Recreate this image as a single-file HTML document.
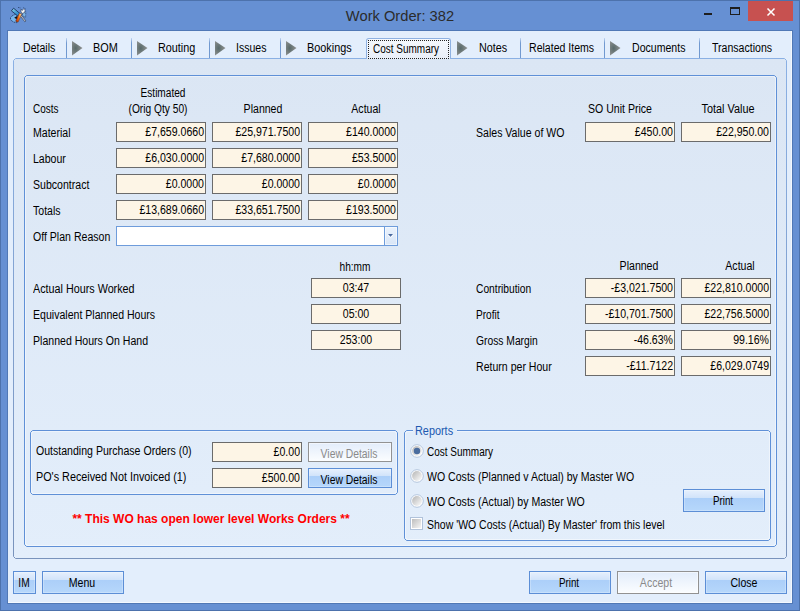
<!DOCTYPE html><html><head><meta charset="utf-8"><style>
html,body{margin:0;padding:0;width:800px;height:611px;overflow:hidden;background:#6690D3;}
body{position:relative;font-family:"Liberation Sans",sans-serif;}
.t{position:absolute;white-space:pre;font-family:"Liberation Sans",sans-serif;}
</style></head><body>
<div style="position:absolute;left:0px;top:0px;width:800px;height:611px;box-sizing:border-box;border:1px solid #4D72AC;background:#6690D3;"></div>
<div style="position:absolute;left:7px;top:30px;width:786px;height:574px;box-sizing:border-box;border:1px solid #5078B6;background:#E3EEFC;box-shadow:inset -1px -1px 0 #F3F8FF;"></div>
<div class="t" style="left:200.0px;top:6.5px;width:400px;text-align:center;line-height:17px;font-size:15.5px;color:#2B2B2B;font-weight:normal;transform:scaleX(0.947);transform-origin:center;">Work Order: 382</div>
<svg style="position:absolute;left:8px;top:4px" width="22" height="22" viewBox="0 0 22 22">
<defs><linearGradient id="ob" x1="0" y1="0.6" x2="1" y2="0.4"><stop offset="0" stop-color="#B02805"/><stop offset="0.45" stop-color="#F06A10"/><stop offset="1" stop-color="#FFE0A0"/></linearGradient>
<linearGradient id="bl" x1="0" y1="0" x2="1" y2="1"><stop offset="0" stop-color="#8FD0E0"/><stop offset="0.6" stop-color="#3A9AD6"/><stop offset="1" stop-color="#1E78C8"/></linearGradient></defs>
<path d="M2.5 13.5 Q4.5 11 7.5 10.5 L10 12.5 L9 18.6 Q5 18.6 2.6 15.6 Z" fill="#74B4EC" stroke="#1F3560" stroke-width="0.9" stroke-dasharray="1.2 0.7"/>
<path d="M6.2 13.8 L9.4 11.8 L8.8 15.2 Z" fill="#111"/>
<path d="M3.4 6.8 L5.6 4.2 L12 9.6 L9.8 12 Z" fill="url(#bl)" stroke="#1F3560" stroke-width="0.9"/>
<path d="M14 9 L17.8 7.8 L17.6 13.5 L15 12 Z" fill="#7DB6E6" stroke="#1F3560" stroke-width="0.7" stroke-dasharray="1 0.7"/>
<path d="M13.6 11.4 L18 17 L16.8 17.8 L12.6 12.4 Z" fill="#C4C4C4" stroke="#2A3A5A" stroke-width="0.6"/>
<path d="M10 3.4 L12.5 4 M15.5 3.6 L17.6 5" stroke="#1F3560" stroke-width="0.8" stroke-dasharray="0.9 0.7"/>
<path d="M13 5.2 L14.4 6.4 L15.8 4.6 L17.2 6 L16.6 8.6 L14.2 9.4 L13 8 Z" fill="#F4F4F4" stroke="#2A3A5A" stroke-width="0.6"/>
<path d="M7.6 17.2 L11.4 9 L13.8 10 L10 18.2 Z" fill="url(#ob)" stroke="#4A1A08" stroke-width="0.4"/>
</svg>
<div style="position:absolute;left:748px;top:1px;width:45px;height:20px;box-sizing:border-box;background:#C75150;"></div>
<svg style="position:absolute;left:748px;top:1px" width="45" height="20"><path d="M19.5 7.5 L26.5 14.5 M26.5 7.5 L19.5 14.5" stroke="#fff" stroke-width="1.5" fill="none"/></svg>
<div style="position:absolute;left:730px;top:7px;width:10px;height:8px;box-sizing:border-box;border:1px solid #1E1E1E;border-top-width:2px;"></div>
<div style="position:absolute;left:704px;top:13px;width:8px;height:2px;box-sizing:border-box;background:#1E1E1E;"></div>
<div style="position:absolute;left:14px;top:59px;width:772px;height:499px;box-sizing:border-box;background:linear-gradient(#DBE6F4 0%,#E3EEFB 100%);"></div>
<svg style="position:absolute;left:13px;top:58px" width="774" height="501"><defs><linearGradient id="pb" x1="0" y1="0" x2="0" y2="1"><stop offset="0" stop-color="#8AB0E4"/><stop offset="1" stop-color="#7993BC"/></linearGradient></defs><path d="M2.5 0.5 L771.5 0.5 L773.5 2.5 L773.5 498.5 L771.5 500.5 L2.5 500.5 L0.5 498.5 L0.5 2.5 Z" fill="none" stroke="url(#pb)" stroke-width="1"/></svg>
<div style="position:absolute;left:367px;top:58px;width:83px;height:1px;box-sizing:border-box;background:#EEF2FA;"></div>
<div style="position:absolute;left:366px;top:38px;width:85px;height:21px;box-sizing:border-box;border:1px solid #8EB1E2;border-bottom:none;border-radius:3px 3px 0 0;background:linear-gradient(#F5F8FD,#E9EEF8);"></div>
<div style="position:absolute;left:368px;top:40px;width:81px;height:19px;box-sizing:border-box;border:1px dotted #222;"></div>
<div style="position:absolute;left:66px;top:38px;width:1px;height:20px;box-sizing:border-box;background:linear-gradient(#C2D6F2,#7199D0 25%,#7199D0);"></div>
<div style="position:absolute;left:131px;top:38px;width:1px;height:20px;box-sizing:border-box;background:linear-gradient(#C2D6F2,#7199D0 25%,#7199D0);"></div>
<div style="position:absolute;left:209px;top:38px;width:1px;height:20px;box-sizing:border-box;background:linear-gradient(#C2D6F2,#7199D0 25%,#7199D0);"></div>
<div style="position:absolute;left:280px;top:38px;width:1px;height:20px;box-sizing:border-box;background:linear-gradient(#C2D6F2,#7199D0 25%,#7199D0);"></div>
<div style="position:absolute;left:520px;top:38px;width:1px;height:20px;box-sizing:border-box;background:linear-gradient(#C2D6F2,#7199D0 25%,#7199D0);"></div>
<div style="position:absolute;left:604px;top:38px;width:1px;height:20px;box-sizing:border-box;background:linear-gradient(#C2D6F2,#7199D0 25%,#7199D0);"></div>
<div style="position:absolute;left:699px;top:38px;width:1px;height:20px;box-sizing:border-box;background:linear-gradient(#C2D6F2,#7199D0 25%,#7199D0);"></div>
<svg style="position:absolute;left:72px;top:41px" width="11" height="15"><defs><radialGradient id="g72" cx="0.35" cy="0.5" r="0.7"><stop offset="0" stop-color="#586A6A"/><stop offset="1" stop-color="#979797"/></radialGradient></defs><path d="M0 0 L10.5 7 L0 14.5 Z" fill="url(#g72)"/></svg>
<svg style="position:absolute;left:137px;top:41px" width="11" height="15"><defs><radialGradient id="g137" cx="0.35" cy="0.5" r="0.7"><stop offset="0" stop-color="#586A6A"/><stop offset="1" stop-color="#979797"/></radialGradient></defs><path d="M0 0 L10.5 7 L0 14.5 Z" fill="url(#g137)"/></svg>
<svg style="position:absolute;left:215px;top:41px" width="11" height="15"><defs><radialGradient id="g215" cx="0.35" cy="0.5" r="0.7"><stop offset="0" stop-color="#586A6A"/><stop offset="1" stop-color="#979797"/></radialGradient></defs><path d="M0 0 L10.5 7 L0 14.5 Z" fill="url(#g215)"/></svg>
<svg style="position:absolute;left:286px;top:41px" width="11" height="15"><defs><radialGradient id="g286" cx="0.35" cy="0.5" r="0.7"><stop offset="0" stop-color="#586A6A"/><stop offset="1" stop-color="#979797"/></radialGradient></defs><path d="M0 0 L10.5 7 L0 14.5 Z" fill="url(#g286)"/></svg>
<svg style="position:absolute;left:457px;top:41px" width="11" height="15"><defs><radialGradient id="g457" cx="0.35" cy="0.5" r="0.7"><stop offset="0" stop-color="#586A6A"/><stop offset="1" stop-color="#979797"/></radialGradient></defs><path d="M0 0 L10.5 7 L0 14.5 Z" fill="url(#g457)"/></svg>
<svg style="position:absolute;left:610px;top:41px" width="11" height="15"><defs><radialGradient id="g610" cx="0.35" cy="0.5" r="0.7"><stop offset="0" stop-color="#586A6A"/><stop offset="1" stop-color="#979797"/></radialGradient></defs><path d="M0 0 L10.5 7 L0 14.5 Z" fill="url(#g610)"/></svg>
<div class="t" style="left:22.5px;top:41px;width:400px;text-align:left;line-height:14px;font-size:12px;color:#000;font-weight:normal;transform:scaleX(0.88);transform-origin:left;">Details</div>
<div class="t" style="left:92.5px;top:41px;width:400px;text-align:left;line-height:14px;font-size:12px;color:#000;font-weight:normal;transform:scaleX(0.9064);transform-origin:left;">BOM</div>
<div class="t" style="left:157.5px;top:41px;width:400px;text-align:left;line-height:14px;font-size:12px;color:#000;font-weight:normal;transform:scaleX(0.9019999999999999);transform-origin:left;">Routing</div>
<div class="t" style="left:235.5px;top:41px;width:400px;text-align:left;line-height:14px;font-size:12px;color:#000;font-weight:normal;transform:scaleX(0.88);transform-origin:left;">Issues</div>
<div class="t" style="left:306.5px;top:41px;width:400px;text-align:left;line-height:14px;font-size:12px;color:#000;font-weight:normal;transform:scaleX(0.9064);transform-origin:left;">Bookings</div>
<div class="t" style="left:372.5px;top:42px;width:400px;text-align:left;line-height:14px;font-size:12px;color:#000;font-weight:normal;transform:scaleX(0.83248);transform-origin:left;">Cost Summary</div>
<div class="t" style="left:478.5px;top:41px;width:400px;text-align:left;line-height:14px;font-size:12px;color:#000;font-weight:normal;transform:scaleX(0.8976000000000001);transform-origin:left;">Notes</div>
<div class="t" style="left:528.5px;top:41px;width:400px;text-align:left;line-height:14px;font-size:12px;color:#000;font-weight:normal;transform:scaleX(0.88);transform-origin:left;">Related Items</div>
<div class="t" style="left:631.5px;top:41px;width:400px;text-align:left;line-height:14px;font-size:12px;color:#000;font-weight:normal;transform:scaleX(0.88);transform-origin:left;">Documents</div>
<div class="t" style="left:711.5px;top:41px;width:400px;text-align:left;line-height:14px;font-size:12px;color:#000;font-weight:normal;transform:scaleX(0.88);transform-origin:left;">Transactions</div>
<svg style="position:absolute;left:24px;top:75px" width="753" height="472"><path d="M3.5 1.5 L749.5 1.5 L751.5 3.5 L751.5 468.5 L749.5 470.5 L3.5 470.5 L1.5 468.5 L1.5 3.5 Z" fill="none" stroke="rgba(255,255,255,0.45)" stroke-width="1"/><path d="M2.5 0.5 L750.5 0.5 L752.5 2.5 L752.5 469.5 L750.5 471.5 L2.5 471.5 L0.5 469.5 L0.5 2.5 Z" fill="none" stroke="#5F90D7" stroke-width="1"/></svg>
<div class="t" style="left:33px;top:102px;width:400px;text-align:left;line-height:14px;font-size:12px;color:#000;font-weight:normal;transform:scaleX(0.83072);transform-origin:left;">Costs</div>
<div class="t" style="left:-37.5px;top:86px;width:400px;text-align:center;line-height:14px;font-size:12px;color:#000;font-weight:normal;transform:scaleX(0.84216);transform-origin:center;">Estimated</div>
<div class="t" style="left:-42.0px;top:102px;width:400px;text-align:center;line-height:14px;font-size:12px;color:#000;font-weight:normal;transform:scaleX(0.8509599999999999);transform-origin:center;">(Orig Qty 50)</div>
<div class="t" style="left:62.5px;top:102px;width:400px;text-align:center;line-height:14px;font-size:12px;color:#000;font-weight:normal;transform:scaleX(0.88);transform-origin:center;">Planned</div>
<div class="t" style="left:166.0px;top:102px;width:400px;text-align:center;line-height:14px;font-size:12px;color:#000;font-weight:normal;transform:scaleX(0.88);transform-origin:center;">Actual</div>
<div class="t" style="left:33px;top:126px;width:400px;text-align:left;line-height:14px;font-size:12px;color:#000;font-weight:normal;transform:scaleX(0.88);transform-origin:left;">Material</div>
<div class="t" style="left:33px;top:152px;width:400px;text-align:left;line-height:14px;font-size:12px;color:#000;font-weight:normal;transform:scaleX(0.88);transform-origin:left;">Labour</div>
<div class="t" style="left:33px;top:178px;width:400px;text-align:left;line-height:14px;font-size:12px;color:#000;font-weight:normal;transform:scaleX(0.88);transform-origin:left;">Subcontract</div>
<div class="t" style="left:33px;top:204px;width:400px;text-align:left;line-height:14px;font-size:12px;color:#000;font-weight:normal;transform:scaleX(0.88);transform-origin:left;">Totals</div>
<div class="t" style="left:33px;top:230px;width:400px;text-align:left;line-height:14px;font-size:12px;color:#000;font-weight:normal;transform:scaleX(0.88);transform-origin:left;">Off Plan Reason</div>
<div style="position:absolute;left:116px;top:122px;width:90px;height:20px;box-sizing:border-box;background:#FDF5E6;border:1px solid #6B6B6B;"></div>
<div class="t" style="left:-196px;top:125px;width:400px;text-align:right;line-height:14px;font-size:12px;color:#000;font-weight:normal;transform:scaleX(0.88);transform-origin:right;">£7,659.0660</div>
<div style="position:absolute;left:212px;top:122px;width:90px;height:20px;box-sizing:border-box;background:#FDF5E6;border:1px solid #6B6B6B;"></div>
<div class="t" style="left:-100px;top:125px;width:400px;text-align:right;line-height:14px;font-size:12px;color:#000;font-weight:normal;transform:scaleX(0.88);transform-origin:right;">£25,971.7500</div>
<div style="position:absolute;left:308px;top:122px;width:90px;height:20px;box-sizing:border-box;background:#FDF5E6;border:1px solid #6B6B6B;"></div>
<div class="t" style="left:-4px;top:125px;width:400px;text-align:right;line-height:14px;font-size:12px;color:#000;font-weight:normal;transform:scaleX(0.88);transform-origin:right;">£140.0000</div>
<div style="position:absolute;left:116px;top:148px;width:90px;height:20px;box-sizing:border-box;background:#FDF5E6;border:1px solid #6B6B6B;"></div>
<div class="t" style="left:-196px;top:151px;width:400px;text-align:right;line-height:14px;font-size:12px;color:#000;font-weight:normal;transform:scaleX(0.88);transform-origin:right;">£6,030.0000</div>
<div style="position:absolute;left:212px;top:148px;width:90px;height:20px;box-sizing:border-box;background:#FDF5E6;border:1px solid #6B6B6B;"></div>
<div class="t" style="left:-100px;top:151px;width:400px;text-align:right;line-height:14px;font-size:12px;color:#000;font-weight:normal;transform:scaleX(0.88);transform-origin:right;">£7,680.0000</div>
<div style="position:absolute;left:308px;top:148px;width:90px;height:20px;box-sizing:border-box;background:#FDF5E6;border:1px solid #6B6B6B;"></div>
<div class="t" style="left:-4px;top:151px;width:400px;text-align:right;line-height:14px;font-size:12px;color:#000;font-weight:normal;transform:scaleX(0.88);transform-origin:right;">£53.5000</div>
<div style="position:absolute;left:116px;top:174px;width:90px;height:20px;box-sizing:border-box;background:#FDF5E6;border:1px solid #6B6B6B;"></div>
<div class="t" style="left:-196px;top:177px;width:400px;text-align:right;line-height:14px;font-size:12px;color:#000;font-weight:normal;transform:scaleX(0.88);transform-origin:right;">£0.0000</div>
<div style="position:absolute;left:212px;top:174px;width:90px;height:20px;box-sizing:border-box;background:#FDF5E6;border:1px solid #6B6B6B;"></div>
<div class="t" style="left:-100px;top:177px;width:400px;text-align:right;line-height:14px;font-size:12px;color:#000;font-weight:normal;transform:scaleX(0.88);transform-origin:right;">£0.0000</div>
<div style="position:absolute;left:308px;top:174px;width:90px;height:20px;box-sizing:border-box;background:#FDF5E6;border:1px solid #6B6B6B;"></div>
<div class="t" style="left:-4px;top:177px;width:400px;text-align:right;line-height:14px;font-size:12px;color:#000;font-weight:normal;transform:scaleX(0.88);transform-origin:right;">£0.0000</div>
<div style="position:absolute;left:116px;top:200px;width:90px;height:20px;box-sizing:border-box;background:#FDF5E6;border:1px solid #6B6B6B;"></div>
<div class="t" style="left:-196px;top:203px;width:400px;text-align:right;line-height:14px;font-size:12px;color:#000;font-weight:normal;transform:scaleX(0.88);transform-origin:right;">£13,689.0660</div>
<div style="position:absolute;left:212px;top:200px;width:90px;height:20px;box-sizing:border-box;background:#FDF5E6;border:1px solid #6B6B6B;"></div>
<div class="t" style="left:-100px;top:203px;width:400px;text-align:right;line-height:14px;font-size:12px;color:#000;font-weight:normal;transform:scaleX(0.88);transform-origin:right;">£33,651.7500</div>
<div style="position:absolute;left:308px;top:200px;width:90px;height:20px;box-sizing:border-box;background:#FDF5E6;border:1px solid #6B6B6B;"></div>
<div class="t" style="left:-4px;top:203px;width:400px;text-align:right;line-height:14px;font-size:12px;color:#000;font-weight:normal;transform:scaleX(0.88);transform-origin:right;">£193.5000</div>
<div style="position:absolute;left:116px;top:226px;width:282px;height:20px;box-sizing:border-box;border:1px solid #6E9CDB;background:#fff;"></div>
<div style="position:absolute;left:384px;top:226px;width:14px;height:20px;box-sizing:border-box;border:1px solid #6E9CDB;background:linear-gradient(#EAF2FD,#D9E6F7);box-shadow:inset 0 0 0 1px rgba(255,255,255,0.5);"></div>
<svg style="position:absolute;left:387px;top:233px" width="8" height="6"><path d="M0.6 1.9 L3.5 4.6 L6.4 1.9" fill="none" stroke="#FFFFFF" stroke-width="0.9"/><path d="M1 1 L6 1 L3.5 3.8 Z" fill="#4B6A9E"/></svg>
<div class="t" style="left:154.7px;top:260px;width:400px;text-align:center;line-height:14px;font-size:12px;color:#000;font-weight:normal;transform:scaleX(0.8448);transform-origin:center;">hh:mm</div>
<div class="t" style="left:33px;top:282px;width:400px;text-align:left;line-height:14px;font-size:12px;color:#000;font-weight:normal;transform:scaleX(0.8976000000000001);transform-origin:left;">Actual Hours Worked</div>
<div style="position:absolute;left:311px;top:278px;width:90px;height:20px;box-sizing:border-box;background:#FDF5E6;border:1px solid #6B6B6B;"></div>
<div class="t" style="left:156.0px;top:281px;width:400px;text-align:center;line-height:14px;font-size:12px;color:#000;font-weight:normal;transform:scaleX(0.88);transform-origin:center;">03:47</div>
<div class="t" style="left:33px;top:308px;width:400px;text-align:left;line-height:14px;font-size:12px;color:#000;font-weight:normal;transform:scaleX(0.88);transform-origin:left;">Equivalent Planned Hours</div>
<div style="position:absolute;left:311px;top:304px;width:90px;height:20px;box-sizing:border-box;background:#FDF5E6;border:1px solid #6B6B6B;"></div>
<div class="t" style="left:156.0px;top:307px;width:400px;text-align:center;line-height:14px;font-size:12px;color:#000;font-weight:normal;transform:scaleX(0.88);transform-origin:center;">05:00</div>
<div class="t" style="left:33px;top:334px;width:400px;text-align:left;line-height:14px;font-size:12px;color:#000;font-weight:normal;transform:scaleX(0.88);transform-origin:left;">Planned Hours On Hand</div>
<div style="position:absolute;left:311px;top:330px;width:90px;height:20px;box-sizing:border-box;background:#FDF5E6;border:1px solid #6B6B6B;"></div>
<div class="t" style="left:156.0px;top:333px;width:400px;text-align:center;line-height:14px;font-size:12px;color:#000;font-weight:normal;transform:scaleX(0.88);transform-origin:center;">253:00</div>
<div class="t" style="left:476px;top:126px;width:400px;text-align:left;line-height:14px;font-size:12px;color:#000;font-weight:normal;transform:scaleX(0.88);transform-origin:left;">Sales Value of WO</div>
<div class="t" style="left:588px;top:102px;width:400px;text-align:left;line-height:14px;font-size:12px;color:#000;font-weight:normal;transform:scaleX(0.88);transform-origin:left;">SO Unit Price</div>
<div class="t" style="left:528.0px;top:102px;width:400px;text-align:center;line-height:14px;font-size:12px;color:#000;font-weight:normal;transform:scaleX(0.9055199999999999);transform-origin:center;">Total Value</div>
<div style="position:absolute;left:585px;top:122px;width:90px;height:20px;box-sizing:border-box;background:#FDF5E6;border:1px solid #6B6B6B;"></div>
<div class="t" style="left:273px;top:125px;width:400px;text-align:right;line-height:14px;font-size:12px;color:#000;font-weight:normal;transform:scaleX(0.88);transform-origin:right;">£450.00</div>
<div style="position:absolute;left:681px;top:122px;width:90px;height:20px;box-sizing:border-box;background:#FDF5E6;border:1px solid #6B6B6B;"></div>
<div class="t" style="left:369px;top:125px;width:400px;text-align:right;line-height:14px;font-size:12px;color:#000;font-weight:normal;transform:scaleX(0.88);transform-origin:right;">£22,950.00</div>
<div class="t" style="left:438.5px;top:259px;width:400px;text-align:center;line-height:14px;font-size:12px;color:#000;font-weight:normal;transform:scaleX(0.88);transform-origin:center;">Planned</div>
<div class="t" style="left:539.5px;top:259px;width:400px;text-align:center;line-height:14px;font-size:12px;color:#000;font-weight:normal;transform:scaleX(0.88);transform-origin:center;">Actual</div>
<div class="t" style="left:476px;top:282px;width:400px;text-align:left;line-height:14px;font-size:12px;color:#000;font-weight:normal;transform:scaleX(0.8536);transform-origin:left;">Contribution</div>
<div style="position:absolute;left:585px;top:278px;width:90px;height:20px;box-sizing:border-box;background:#FDF5E6;border:1px solid #6B6B6B;"></div>
<div class="t" style="left:273px;top:281px;width:400px;text-align:right;line-height:14px;font-size:12px;color:#000;font-weight:normal;transform:scaleX(0.88);transform-origin:right;">-£3,021.7500</div>
<div style="position:absolute;left:681px;top:278px;width:90px;height:20px;box-sizing:border-box;background:#FDF5E6;border:1px solid #6B6B6B;"></div>
<div class="t" style="left:369px;top:281px;width:400px;text-align:right;line-height:14px;font-size:12px;color:#000;font-weight:normal;transform:scaleX(0.88);transform-origin:right;">£22,810.0000</div>
<div class="t" style="left:476px;top:308px;width:400px;text-align:left;line-height:14px;font-size:12px;color:#000;font-weight:normal;transform:scaleX(0.8395199999999999);transform-origin:left;">Profit</div>
<div style="position:absolute;left:585px;top:304px;width:90px;height:20px;box-sizing:border-box;background:#FDF5E6;border:1px solid #6B6B6B;"></div>
<div class="t" style="left:273px;top:307px;width:400px;text-align:right;line-height:14px;font-size:12px;color:#000;font-weight:normal;transform:scaleX(0.88);transform-origin:right;">-£10,701.7500</div>
<div style="position:absolute;left:681px;top:304px;width:90px;height:20px;box-sizing:border-box;background:#FDF5E6;border:1px solid #6B6B6B;"></div>
<div class="t" style="left:369px;top:307px;width:400px;text-align:right;line-height:14px;font-size:12px;color:#000;font-weight:normal;transform:scaleX(0.88);transform-origin:right;">£22,756.5000</div>
<div class="t" style="left:476px;top:334px;width:400px;text-align:left;line-height:14px;font-size:12px;color:#000;font-weight:normal;transform:scaleX(0.858);transform-origin:left;">Gross Margin</div>
<div style="position:absolute;left:585px;top:330px;width:90px;height:20px;box-sizing:border-box;background:#FDF5E6;border:1px solid #6B6B6B;"></div>
<div class="t" style="left:273px;top:333px;width:400px;text-align:right;line-height:14px;font-size:12px;color:#000;font-weight:normal;transform:scaleX(0.88);transform-origin:right;">-46.63%</div>
<div style="position:absolute;left:681px;top:330px;width:90px;height:20px;box-sizing:border-box;background:#FDF5E6;border:1px solid #6B6B6B;"></div>
<div class="t" style="left:369px;top:333px;width:400px;text-align:right;line-height:14px;font-size:12px;color:#000;font-weight:normal;transform:scaleX(0.88);transform-origin:right;">99.16%</div>
<div class="t" style="left:476px;top:360px;width:400px;text-align:left;line-height:14px;font-size:12px;color:#000;font-weight:normal;transform:scaleX(0.88);transform-origin:left;">Return per Hour</div>
<div style="position:absolute;left:585px;top:356px;width:90px;height:20px;box-sizing:border-box;background:#FDF5E6;border:1px solid #6B6B6B;"></div>
<div class="t" style="left:273px;top:359px;width:400px;text-align:right;line-height:14px;font-size:12px;color:#000;font-weight:normal;transform:scaleX(0.88);transform-origin:right;">-£11.7122</div>
<div style="position:absolute;left:681px;top:356px;width:90px;height:20px;box-sizing:border-box;background:#FDF5E6;border:1px solid #6B6B6B;"></div>
<div class="t" style="left:369px;top:359px;width:400px;text-align:right;line-height:14px;font-size:12px;color:#000;font-weight:normal;transform:scaleX(0.88);transform-origin:right;">£6,029.0749</div>
<svg style="position:absolute;left:30px;top:430px" width="368" height="65"><path d="M3.5 1.5 L364.5 1.5 L366.5 3.5 L366.5 61.5 L364.5 63.5 L3.5 63.5 L1.5 61.5 L1.5 3.5 Z" fill="none" stroke="rgba(255,255,255,0.45)" stroke-width="1"/><path d="M2.5 0.5 L365.5 0.5 L367.5 2.5 L367.5 62.5 L365.5 64.5 L2.5 64.5 L0.5 62.5 L0.5 2.5 Z" fill="none" stroke="#5F90D7" stroke-width="1"/></svg>
<div class="t" style="left:36px;top:444px;width:400px;text-align:left;line-height:14px;font-size:12px;color:#000;font-weight:normal;transform:scaleX(0.88);transform-origin:left;">Outstanding Purchase Orders (0)</div>
<div class="t" style="left:36px;top:470px;width:400px;text-align:left;line-height:14px;font-size:12px;color:#000;font-weight:normal;transform:scaleX(0.9002399999999999);transform-origin:left;">PO&#39;s Received Not Invoiced (1)</div>
<div style="position:absolute;left:212px;top:442px;width:90px;height:20px;box-sizing:border-box;background:#FDF5E6;border:1px solid #6B6B6B;"></div>
<div class="t" style="left:-100px;top:445px;width:400px;text-align:right;line-height:14px;font-size:12px;color:#000;font-weight:normal;transform:scaleX(0.88);transform-origin:right;">£0.00</div>
<div style="position:absolute;left:212px;top:468px;width:90px;height:20px;box-sizing:border-box;background:#FDF5E6;border:1px solid #6B6B6B;"></div>
<div class="t" style="left:-100px;top:471px;width:400px;text-align:right;line-height:14px;font-size:12px;color:#000;font-weight:normal;transform:scaleX(0.88);transform-origin:right;">£500.00</div>
<div style="position:absolute;left:308px;top:442px;width:84px;height:20px;box-sizing:border-box;border:1px solid #929292;background:linear-gradient(#E3EDFB,#FBFDFF);box-shadow:inset 0 0 0 1px rgba(255,255,255,0.5);"></div>
<div class="t" style="left:149.2px;top:446.5px;width:400px;text-align:center;line-height:14px;font-size:12px;color:#8A8A8A;font-weight:normal;transform:scaleX(0.8623999999999999);transform-origin:center;">View Details</div>
<div style="position:absolute;left:308px;top:468px;width:84px;height:20px;box-sizing:border-box;border:1px solid #5C8ED6;background:linear-gradient(#E6F0FD 0%,#D1E3FA 38%,#ACCFF9 40%,#B6D7FB 100%);box-shadow:inset 0 0 0 1px rgba(255,255,255,0.25);"></div>
<div class="t" style="left:149.2px;top:472.5px;width:400px;text-align:center;line-height:14px;font-size:12px;color:#000;font-weight:normal;transform:scaleX(0.8623999999999999);transform-origin:center;">View Details</div>
<div class="t" style="left:11.0px;top:512px;width:400px;text-align:center;line-height:14px;font-size:12px;color:#FF0000;font-weight:bold;transform:scaleX(1.0);transform-origin:center;">** This WO has open lower level Works Orders **</div>
<svg style="position:absolute;left:404px;top:430px" width="367" height="111"><path d="M53 1.5 L363.5 1.5 L365.5 3.5 L365.5 107.5 L363.5 109.5 L3.5 109.5 L1.5 107.5 L1.5 3.5 L3.5 1.5 L9 1.5" fill="none" stroke="rgba(255,255,255,0.45)" stroke-width="1"/><path d="M53 0.5 L364.5 0.5 L366.5 2.5 L366.5 108.5 L364.5 110.5 L2.5 110.5 L0.5 108.5 L0.5 2.5 L2.5 0.5 L9 0.5" fill="none" stroke="#5F90D7" stroke-width="1"/></svg>
<div class="t" style="left:415.3px;top:424px;width:400px;text-align:left;line-height:14px;font-size:12px;color:#2058B0;font-weight:normal;transform:scaleX(0.9064);transform-origin:left;">Reports</div>
<svg style="position:absolute;left:410px;top:444px" width="14" height="14"><defs><linearGradient id="rg451" x1="0" y1="0" x2="1" y2="1"><stop offset="0" stop-color="#B4B4B4"/><stop offset="1" stop-color="#FFFFFF"/></linearGradient></defs><circle cx="7" cy="7" r="6.3" fill="#fff" stroke="#B3C5DD" stroke-width="1"/><circle cx="7" cy="7" r="4.9" fill="url(#rg451)"/><circle cx="7" cy="7" r="3.2" fill="#4A6C9E"/></svg>
<svg style="position:absolute;left:410px;top:469px" width="14" height="14"><defs><linearGradient id="rg476" x1="0" y1="0" x2="1" y2="1"><stop offset="0" stop-color="#B4B4B4"/><stop offset="1" stop-color="#FFFFFF"/></linearGradient></defs><circle cx="7" cy="7" r="6.3" fill="#fff" stroke="#B3C5DD" stroke-width="1"/><circle cx="7" cy="7" r="4.9" fill="url(#rg476)"/></svg>
<svg style="position:absolute;left:410px;top:494px" width="14" height="14"><defs><linearGradient id="rg501" x1="0" y1="0" x2="1" y2="1"><stop offset="0" stop-color="#B4B4B4"/><stop offset="1" stop-color="#FFFFFF"/></linearGradient></defs><circle cx="7" cy="7" r="6.3" fill="#fff" stroke="#B3C5DD" stroke-width="1"/><circle cx="7" cy="7" r="4.9" fill="url(#rg501)"/></svg>
<div class="t" style="left:427px;top:445px;width:400px;text-align:left;line-height:14px;font-size:12px;color:#000;font-weight:normal;transform:scaleX(0.83248);transform-origin:left;">Cost Summary</div>
<div class="t" style="left:427px;top:470px;width:400px;text-align:left;line-height:14px;font-size:12px;color:#000;font-weight:normal;transform:scaleX(0.88);transform-origin:left;">WO Costs (Planned v Actual) by Master WO</div>
<div class="t" style="left:427px;top:495px;width:400px;text-align:left;line-height:14px;font-size:12px;color:#000;font-weight:normal;transform:scaleX(0.88);transform-origin:left;">WO Costs (Actual) by Master WO</div>
<div style="position:absolute;left:410px;top:517px;width:13px;height:13px;box-sizing:border-box;border:1px solid #B0C2DA;background:#fff;"></div>
<div style="position:absolute;left:412px;top:519px;width:9px;height:9px;box-sizing:border-box;background:linear-gradient(135deg,#BDBDBD,#F6F6F6);"></div>
<div class="t" style="left:427px;top:518px;width:400px;text-align:left;line-height:14px;font-size:12px;color:#000;font-weight:normal;transform:scaleX(0.87384);transform-origin:left;">Show &#39;WO Costs (Actual) By Master&#39; from this level</div>
<div style="position:absolute;left:683px;top:489px;width:82px;height:23px;box-sizing:border-box;border:1px solid #5C8ED6;background:linear-gradient(#E6F0FD 0%,#D1E3FA 38%,#ACCFF9 40%,#B6D7FB 100%);box-shadow:inset 0 0 0 1px rgba(255,255,255,0.25);"></div>
<div class="t" style="left:523.3px;top:493.5px;width:400px;text-align:center;line-height:14px;font-size:12px;color:#000;font-weight:normal;transform:scaleX(0.8140000000000001);transform-origin:center;">Print</div>
<div style="position:absolute;left:13px;top:571px;width:23px;height:23px;box-sizing:border-box;border:1px solid #5C8ED6;background:linear-gradient(#E6F0FD 0%,#D1E3FA 38%,#ACCFF9 40%,#B6D7FB 100%);box-shadow:inset 0 0 0 1px rgba(255,255,255,0.25);"></div>
<div class="t" style="left:-176.5px;top:575.5px;width:400px;text-align:center;line-height:14px;font-size:12px;color:#000;font-weight:normal;transform:scaleX(0.8448);transform-origin:center;">IM</div>
<div style="position:absolute;left:42px;top:571px;width:82px;height:23px;box-sizing:border-box;border:1px solid #5C8ED6;background:linear-gradient(#E6F0FD 0%,#D1E3FA 38%,#ACCFF9 40%,#B6D7FB 100%);box-shadow:inset 0 0 0 1px rgba(255,255,255,0.25);"></div>
<div class="t" style="left:-117.8px;top:575.5px;width:400px;text-align:center;line-height:14px;font-size:12px;color:#000;font-weight:normal;transform:scaleX(0.88);transform-origin:center;">Menu</div>
<div style="position:absolute;left:529px;top:571px;width:82px;height:23px;box-sizing:border-box;border:1px solid #5C8ED6;background:linear-gradient(#E6F0FD 0%,#D1E3FA 38%,#ACCFF9 40%,#B6D7FB 100%);box-shadow:inset 0 0 0 1px rgba(255,255,255,0.25);"></div>
<div class="t" style="left:369.29999999999995px;top:575.5px;width:400px;text-align:center;line-height:14px;font-size:12px;color:#000;font-weight:normal;transform:scaleX(0.8140000000000001);transform-origin:center;">Print</div>
<div style="position:absolute;left:617px;top:571px;width:82px;height:23px;box-sizing:border-box;border:1px solid #929292;background:linear-gradient(#E3EDFB,#FBFDFF);box-shadow:inset 0 0 0 1px rgba(255,255,255,0.5);"></div>
<div class="t" style="left:456.29999999999995px;top:575.5px;width:400px;text-align:center;line-height:14px;font-size:12px;color:#8A8A8A;font-weight:normal;transform:scaleX(0.88);transform-origin:center;">Accept</div>
<div style="position:absolute;left:705px;top:571px;width:82px;height:23px;box-sizing:border-box;border:1px solid #5C8ED6;background:linear-gradient(#E6F0FD 0%,#D1E3FA 38%,#ACCFF9 40%,#B6D7FB 100%);box-shadow:inset 0 0 0 1px rgba(255,255,255,0.25);"></div>
<div class="t" style="left:544.3px;top:575.5px;width:400px;text-align:center;line-height:14px;font-size:12px;color:#000;font-weight:normal;transform:scaleX(0.88);transform-origin:center;">Close</div>
</body></html>
